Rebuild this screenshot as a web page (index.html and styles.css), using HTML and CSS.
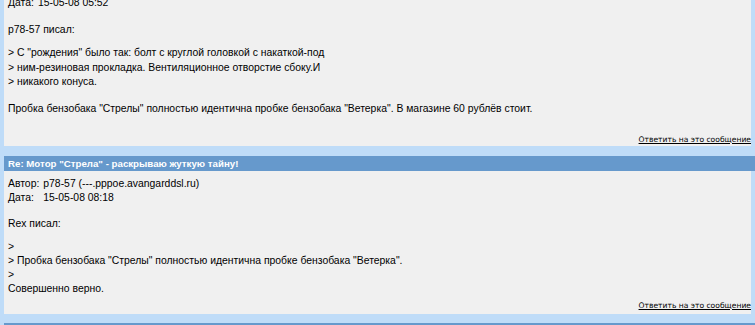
FILE: index.html
```html
<!DOCTYPE html>
<html lang="ru">

<head>
    <meta charset="UTF-8">
    <title>Мотор "Стрела" - раскрываю жуткую тайну!</title>
    <link rel="stylesheet" href="styles.css">
</head>

<body>
    <div class="thread">
        <div class="post first">
            <div class="post-body">
                <div class="meta">
                    <span>Дата:</span><span>15-05-08 05:52</span>
                </div>
                <div class="said">p78-57 писал:</div>
                <div class="quote">
                    &gt; C "рождения" было так: болт с круглой головкой с накаткой-под<br>
                    &gt; ним-резиновая прокладка. Вентиляционное отворстие сбоку.И<br>
                    &gt; никакого конуса.
                </div>
                <div class="text">Пробка бензобака "Стрелы" полностью идентична пробке бензобака "Ветерка". В магазине 60 рублёв стоит.</div>
            </div>
            <div class="reply"><a href="#">Ответить на это сообщение</a></div>
        </div>

        <div class="post second">
            <div class="post-head">Re: Мотор "Стрела" - раскрываю жуткую тайну!</div>
            <div class="post-body">
                <div class="meta">
                    <span>Автор:</span><span>p78-57 (---.pppoe.avangarddsl.ru)</span>
                    <span>Дата:</span><span>15-05-08 08:18</span>
                </div>
                <div class="said">Rex писал:</div>
                <div class="quote">
                    &gt;<br>
                    &gt; Пробка бензобака "Стрелы" полностью идентична пробке бензобака "Ветерка".<br>
                    &gt;<br>
                    Совершенно верно.
                </div>
            </div>
            <div class="reply"><a href="#">Ответить на это сообщение</a></div>
        </div>

        <div class="post">
            <div class="post-head">Re: Мотор "Стрела" - раскрываю жуткую тайну!</div>
        </div>
    </div>
</body>

</html>
```

FILE: styles.css
```css
body {
    margin: 0;
    font-family: "Liberation Sans", Arial, sans-serif;
    font-size: 10.4px;
    line-height: 14px;
    color: #000;
    background-color: #bfdcf8;
    overflow: hidden;
}

.thread {
    padding: 0 0 0 4px;
}

.post {
    margin-bottom: 10px;
}

.post.second {
    margin-bottom: 9px;
}

.post.first {
    margin-top: -4px;
}

.post-head {
    background-color: #6699cc;
    color: #fff;
    font-weight: bold;
    font-size: 9.7px;
    line-height: 15px;
    height: 15px;
    padding-left: 4px;
}

.post-body {
    background-color: #f0f0f0;
    margin-right: 4px;
    padding: 0 4px;
}

.second .post-body {
    padding-top: 6px;
}

.meta {
    display: grid;
    grid-template-columns: auto 1fr;
    column-gap: 4px;
}

.said {
    padding-top: 13px;
}

.second .said {
    padding-top: 12px;
}

.quote {
    padding-top: 9px;
    line-height: 14.5px;
}

.second .quote {
    padding-top: 9px;
    line-height: 14px;
}

.text {
    padding-top: 12px;
}

.reply {
    background-color: #f0f0f0;
    margin-right: 4px;
    text-align: right;
    font-family: "DejaVu Sans", Verdana, sans-serif;
    font-size: 7.6px;
    line-height: 12px;
    padding: 18px 0 0;
}

.second .reply {
    padding: 4px 0 2px;
}

.reply a {
    color: #000;
}
```
